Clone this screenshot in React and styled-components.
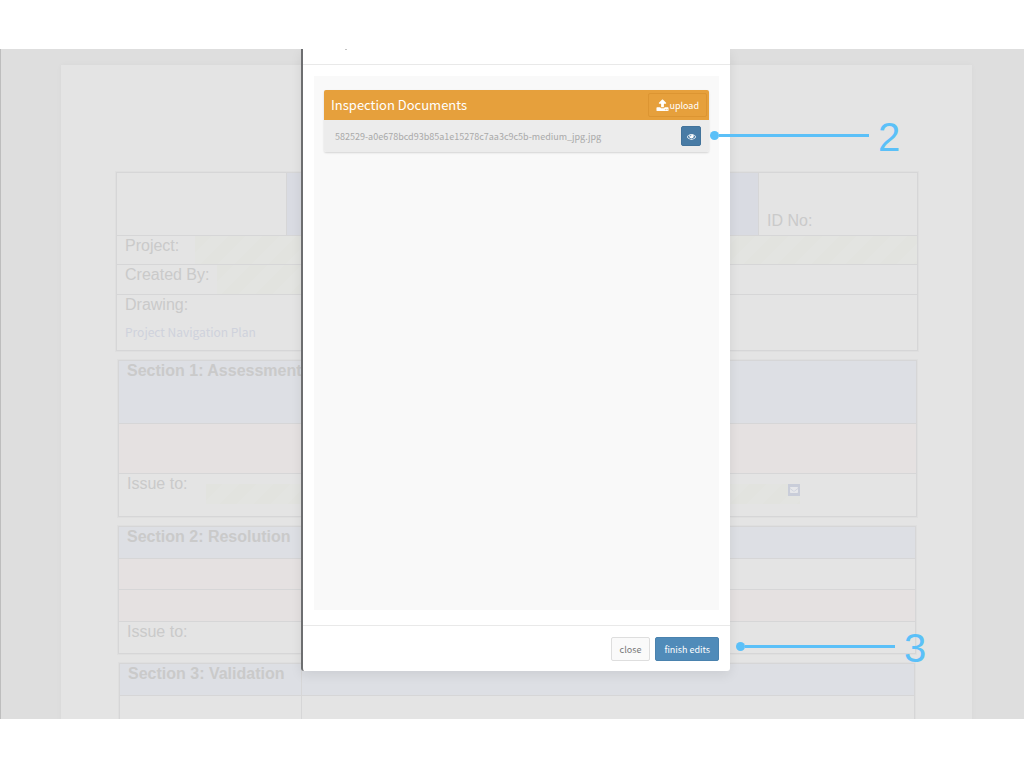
import styled, { createGlobalStyle } from "styled-components";
import { FaEnvelope } from "react-icons/fa";

const line = "#d6d6d7";
const blue = "#dddfe4";
const pink = "#e5e1e1";

function UploadIcon() {
  return (
    <svg width="13" height="13" viewBox="0 0 1792 1792" fill="currentColor">
      <path d="M1344 1472q0-26-19-45t-45-19-45 19-19 45 19 45 45 19 45-19 19-45zm256 0q0-26-19-45t-45-19-45 19-19 45 19 45 45 19 45-19 19-45zm128-224v320q0 40-28 68t-68 28h-1472q-40 0-68-28t-28-68v-320q0-40 28-68t68-28h427q21 56 70.5 92t110.5 36h256q61 0 110.5-36t70.5-92h427q40 0 68 28t28 68zm-325-648q-17 40-59 40h-256v448q0 26-19 45t-45 19h-256q-26 0-45-19t-19-45v-448h-256q-42 0-59-40-17-39 14-69l448-448q18-19 45-19t45 19l448 448q31 30 14 69z" />
    </svg>
  );
}

function EyeIcon() {
  return (
    <svg width="9" height="9" viewBox="0 0 1792 1792" fill="currentColor">
      <path d="M1664 960q-152-236-381-353 61 104 61 225 0 185-131.5 316.5t-316.5 131.5-316.5-131.5-131.5-316.5q0-121 61-225-229 117-381 353 133 205 333.5 326.5t434.5 121.5 434.5-121.5 333.5-326.5zm-720-384q0-20-14-34t-34-14q-125 0-214.5 89.5t-89.5 214.5q0 20 14 34t34 14 34-14 14-34q0-86 61-147t147-61q20 0 34-14t14-34zm848 384q0 34-20 69-140 230-376.5 368.5t-499.5 138.5-499.5-139-376.5-368q-20-35-20-69t20-69q140-229 376.5-368t499.5-139 499.5 139 376.5 368q20 35 20 69z" />
    </svg>
  );
}

function Callout({ top, inset, length, number }) {
  return (
    <CalloutBox $top={top} $inset={inset}>
      <Dot />
      <Leader $length={length} />
      <CalloutNumber>{number}</CalloutNumber>
    </CalloutBox>
  );
}

function InspectionForm() {
  return (
    <Sheet>
      <Block $width={802} $shift={55}>
        <Row $height={62}>
          <Cell $width={169} />
          <Cell $grow $bg="#d9dbe2" $divided />
          <Cell $width={159} $divided $bottom>
            ID No:
          </Cell>
        </Row>
        <Row $height={28}>
          <Cell $width={78}>Project:</Cell>
          <Striped />
        </Row>
        <Row $height={29}>
          <Cell $width={99}>Created By:</Cell>
          <Striped $width={120} />
        </Row>
        <Row $height={55}>
          <Cell $grow>
            Drawing:
            <PlanLink href="#plan">Project Navigation Plan</PlanLink>
          </Cell>
        </Row>
      </Block>

      <Block $width={799} $shift={57}>
        <Row $height={62} $bg={blue}>
          <SectionTitle>Section 1: Assessment</SectionTitle>
        </Row>
        <Row $height={49} $bg={pink} />
        <Row $height={42}>
          <Cell $width={87}>Issue to:</Cell>
          <IssueField>
            <MailButton aria-label="Send mail">
              <FaEnvelope size={8} />
            </MailButton>
          </IssueField>
        </Row>
      </Block>

      <Block $width={798} $shift={57}>
        <Row $height={31} $bg={blue}>
          <SectionTitle>Section 2: Resolution</SectionTitle>
        </Row>
        <Row $height={30}>
          <Cell $width={300} $bg={pink} />
        </Row>
        <Row $height={31} $bg={pink} />
        <Row $height={31}>
          <Cell $grow>Issue to:</Cell>
        </Row>
      </Block>

      <Block $width={796} $shift={58}>
        <Row $height={31} $bg={blue}>
          <SectionTitle $width={181}>Section 3: Validation</SectionTitle>
          <Cell $grow $divided />
        </Row>
        <Row $height={40}>
          <Cell $width={181} />
          <Cell $grow $divided />
        </Row>
      </Block>
    </Sheet>
  );
}

function DocumentsModal() {
  return (
    <Modal role="dialog" aria-label="Inspection Documents">
      <ModalHeader />
      <ModalBody>
        <Panel>
          <Card>
            <CardHeader>
              <CardTitle>Inspection Documents</CardTitle>
              <UploadButton>
                <UploadIcon />
                upload
              </UploadButton>
            </CardHeader>
            <FileRow>
              <FileName>
                582529-a0e678bcd93b85a1e15278c7aa3c9c5b-medium_jpg.jpg
              </FileName>
              <ViewButton aria-label="View document">
                <EyeIcon />
              </ViewButton>
            </FileRow>
          </Card>
        </Panel>
      </ModalBody>
      <ModalFooter>
        <Button>close</Button>
        <Button $primary>finish edits</Button>
      </ModalFooter>
      <Callout top={66} inset={-20} length={150} number="2" />
      <Callout top={577} inset={6} length={150} number="3" />
    </Modal>
  );
}

function App() {
  return (
    <>
      <GlobalStyle />
      <Stage>
        <InspectionForm />
        <Overlay>
          <DocumentsModal />
        </Overlay>
      </Stage>
    </>
  );
}

const GlobalStyle = createGlobalStyle`
  * {
    box-sizing: border-box;
  }
  body {
    margin: 0;
    background: #fff;
    font-family: "Noto Sans CJK SC", "Noto Sans", sans-serif;
  }
  button {
    font-family: inherit;
    cursor: pointer;
  }
`;

const Stage = styled.main`
  position: relative;
  height: 670px;
  margin: 49px 0;
  padding: 16px 52px 0 60px;
  overflow: hidden;
  background: #dedede;
  border-left: 1px solid #bdbdbd;
`;

const Sheet = styled.section`
  display: flex;
  flex-direction: column;
  gap: 9px;
  min-height: 100%;
  padding-top: 107px;
  background: #e4e4e4;
  box-shadow: 0 0 6px rgba(0, 0, 0, 0.03);
  color: #cacaca;
  font-family: "Liberation Sans", Arial, sans-serif;
  font-size: 16px;
  line-height: 20px;
`;

const Block = styled.div`
  width: ${({ $width }) => $width}px;
  margin-left: ${({ $shift }) => $shift}px;
  border: 1px solid ${line};
  outline: 1px solid rgba(0, 0, 0, 0.02);
`;

const Row = styled.div`
  display: flex;
  box-sizing: content-box;
  height: ${({ $height }) => $height}px;
  background: ${({ $bg }) => $bg || "transparent"};
  border-top: 1px solid ${line};

  &:first-child {
    border-top: 0;
  }
`;

const Cell = styled.div`
  display: flex;
  flex-direction: column;
  flex: ${({ $grow, $width }) => ($grow ? "1" : `0 0 ${$width}px`)};
  justify-content: ${({ $bottom }) => ($bottom ? "flex-end" : "flex-start")};
  padding: 0 8px ${({ $bottom }) => ($bottom ? 4 : 0)}px;
  background: ${({ $bg }) => $bg || "transparent"};
  border-left: ${({ $divided }) => ($divided ? `1px solid ${line}` : "none")};
  white-space: nowrap;
`;

const SectionTitle = styled.h2`
  flex: 0 0 ${({ $width }) => ($width ? `${$width}px` : "auto")};
  margin: 0;
  padding-left: 8px;
  font-size: 16px;
  line-height: 20px;
  white-space: nowrap;
`;

const Striped = styled.div`
  flex: ${({ $width }) => ($width ? `0 0 ${$width}px` : "1")};
  background: repeating-linear-gradient(
    135deg,
    #e2e3df 0 12px,
    #e3e4e1 12px 24px
  );
`;

const PlanLink = styled.a`
  margin-top: 7px;
  color: #cfd2dc;
  font-family: "Noto Sans CJK SC", "Noto Sans", sans-serif;
  font-size: 12px;
  line-height: 20px;
  text-decoration: none;
`;

const IssueField = styled(Striped)`
  display: flex;
  flex: 0 0 594px;
  align-items: flex-start;
  justify-content: flex-end;
  height: 20px;
  margin-top: 10px;
`;

const MailButton = styled.button`
  display: flex;
  align-items: center;
  justify-content: center;
  width: 12px;
  height: 12px;
  padding: 0;
  border: 0;
  background: #c9cdd9;
  color: #e6e7ea;
`;

const Overlay = styled.div`
  position: absolute;
  inset: 0;
  display: flex;
  align-items: flex-start;
  justify-content: center;
  padding-left: 6px;
`;

const Modal = styled.div`
  position: relative;
  width: 429px;
  background: #fff;
  border-left: 2px solid #6d6e70;
  border-radius: 0 0 3px 3px;
  box-shadow: 0 4px 12px rgba(0, 0, 0, 0.08);
`;

const ModalHeader = styled.header`
  height: 16px;
  border-bottom: 1px solid #e9e9e9;

  &::before {
    content: "";
    display: block;
    width: 2px;
    height: 1px;
    margin-left: 42px;
    background: #c4c4c4;
  }
`;

const ModalBody = styled.div`
  padding: 11px 11px 15px;
`;

const Panel = styled.div`
  min-height: 534px;
  padding: 14px 10px;
  background: #f9f9f9;
`;

const Card = styled.section`
  border-radius: 2px;
  box-shadow: 0 1px 2px rgba(0, 0, 0, 0.15);
  overflow: hidden;
`;

const CardHeader = styled.header`
  display: flex;
  align-items: center;
  justify-content: space-between;
  height: 30px;
  padding: 0 2px 0 7px;
  background: #e6a03c;
  color: #fff;
`;

const CardTitle = styled.h1`
  margin: 0;
  font-size: 13px;
  font-weight: 400;
  line-height: 20px;
`;

const UploadButton = styled.button`
  display: flex;
  align-items: center;
  height: 24px;
  padding: 0 7px;
  background: transparent;
  border: 1px solid #dc9532;
  border-radius: 2px;
  color: #fff;
  font-size: 9px;
`;

const FileRow = styled.div`
  display: flex;
  align-items: center;
  justify-content: space-between;
  height: 32px;
  padding: 0 8px 0 11px;
  background: #ececec;
`;

const FileName = styled.span`
  color: #a9a9a9;
  font-size: 9px;
`;

const ViewButton = styled.button`
  display: flex;
  align-items: center;
  justify-content: center;
  width: 20px;
  height: 20px;
  padding: 0;
  background: #487ba5;
  border: 1px solid #42739b;
  border-radius: 2px;
  color: #fff;
`;

const ModalFooter = styled.footer`
  display: flex;
  justify-content: flex-end;
  gap: 5px;
  padding: 11px 11px 10px;
  border-top: 1px solid #e9e9e9;
`;

const Button = styled.button`
  height: 24px;
  padding: 0 8px;
  background: ${({ $primary }) => ($primary ? "#508bb9" : "#fafafa")};
  border: 1px solid ${({ $primary }) => ($primary ? "#4a82ae" : "#dedede")};
  border-radius: 2px;
  color: ${({ $primary }) => ($primary ? "#fff" : "#777")};
  font-size: 9px;
`;

const CalloutBox = styled.div`
  position: absolute;
  top: ${({ $top }) => $top}px;
  left: calc(100% + ${({ $inset }) => $inset}px);
  display: flex;
  align-items: center;
  height: 40px;
  color: #5bc0f8;
`;

const Dot = styled.span`
  width: 9px;
  height: 9px;
  background: currentColor;
  border-radius: 50%;
`;

const Leader = styled.span`
  width: ${({ $length }) => $length}px;
  height: 3px;
  background: currentColor;
`;

const CalloutNumber = styled.span`
  margin-left: 9px;
  padding-top: 4px;
  font-family: "Liberation Sans", Helvetica, sans-serif;
  font-size: 40px;
  line-height: 40px;
`;

export default App;
